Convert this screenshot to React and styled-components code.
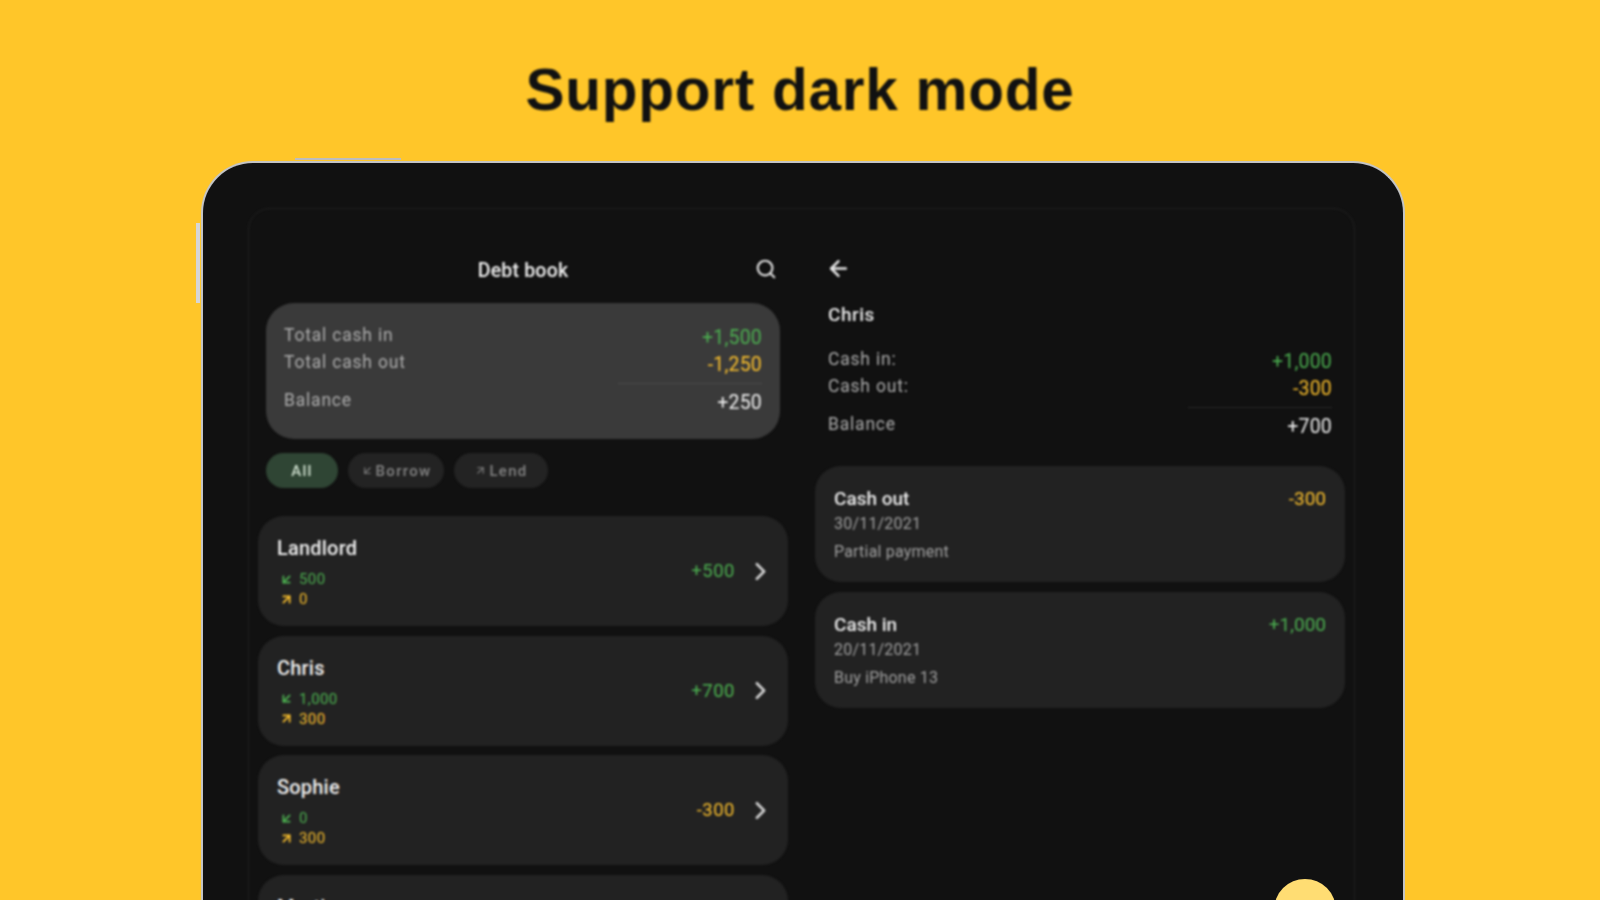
import React from "react";
import styled, { createGlobalStyle } from "styled-components";
import { ArrowDownLeft, ArrowLeft, ArrowUpRight, ChevronRight, Search } from "lucide-react";

const Global = createGlobalStyle`
  html, body { margin: 0; padding: 0; height: 100%; background: #ffc629; }
  #root { height: 100%; }
`;

const GREEN = "#4caf50";
const AMBER = "#fbc02d";
const tone = (t) => (t === "in" ? GREEN : t === "out" ? AMBER : t === "muted" ? "#a8a8a8" : "#f0f0f0");

const Page = styled.div`
  width: 1600px;
  height: 900px;
  overflow: hidden;
  background: #ffc629;
  display: flex;
  flex-direction: column;
  align-items: center;
`;
const Title = styled.h1`
  margin: 56px 0 0;
  height: 67px;
  font: 700 58.5px/67px "Liberation Sans", Arial, sans-serif;
  letter-spacing: 0.75px;
  color: #111;
  filter: blur(0.8px);
`;
const Device = styled.div`
  position: relative;
  flex: none;
  box-sizing: border-box;
  width: 1204px;
  height: 900px;
  margin: 38px 0 0 6px;
  padding: 45px 20px 0 45px;
  background: #111111;
  border: 2px solid #c4c4c4;
  border-bottom: 0;
  border-radius: 52px 52px 0 0;
`;
const TopKey = styled.span`
  position: absolute;
  left: 92px;
  top: -5px;
  width: 106px;
  height: 2px;
  background: #bdbdbd;
`;
const SideKey = styled.span`
  position: absolute;
  left: -7px;
  top: 60px;
  width: 4px;
  height: 80px;
  background: #d6d6d6;
`;
const Screen = styled.div`
  box-sizing: border-box;
  width: 1107px;
  height: 900px;
  padding: 0 9px;
  display: grid;
  grid-template-columns: 530px 530px;
  column-gap: 27px;
  border: 1px solid #222222;
  border-radius: 22px;
  filter: blur(0.8px);
`;
const Pane = styled.div`
  display: flex;
  flex-direction: column;
  padding-top: 39px;
`;
const Header = styled.div`
  position: relative;
  height: 44px;
  margin-bottom: 11px;
  display: flex;
  align-items: center;
  justify-content: center;
  font: 500 19.5px Roboto, sans-serif;
  letter-spacing: 0.2px;
  color: #f2f2f2;
`;
const SearchButton = styled.span`
  position: absolute;
  right: 11px;
  top: 10px;
  display: flex;
  color: #dcdcdc;
`;
const Summary = styled.div`
  height: 136px;
  margin: 0 8px;
  padding: 20px 18px 0;
  box-sizing: border-box;
  background: #3a3a3a;
  border-radius: 28px;
  display: flex;
  flex-direction: column;
`;
const TotalRow = styled.div`
  display: flex;
  justify-content: space-between;
  align-items: center;
  height: 27px;
`;
const TotalLabel = styled.span`
  position: relative;
  top: -2px;
  font: 400 17.5px Roboto, sans-serif;
  letter-spacing: 0.8px;
  color: #adadad;
`;
const Value = styled.span`
  position: relative;
  top: 1px;
  font: 400 19.5px Roboto, sans-serif;
  letter-spacing: 0.2px;
  color: ${(p) => tone(p.$tone)};
`;
const Rule = styled.div`
  align-self: flex-end;
  width: 144px;
  height: 1px;
  margin: 6px 0 4px;
  background: ${(p) => p.$color};
`;
const Chips = styled.div`
  display: flex;
  gap: 10px;
  margin: 14px 8px 28px;
`;
const Chip = styled.span`
  box-sizing: border-box;
  height: 35px;
  width: ${(p) => p.$w}px;
  border-radius: 18px;
  display: flex;
  align-items: center;
  justify-content: center;
  gap: 2px;
  font: 500 15px Roboto, sans-serif;
  letter-spacing: 1.3px;
  color: ${(p) => (p.$active ? "#cfe0cf" : "#858585")};
  background: ${(p) => (p.$active ? "#2f4534" : "#232323")};
`;
const List = styled.div`
  display: flex;
  flex-direction: column;
  gap: 9.7px;
`;
const Row = styled.div`
  height: 110px;
  flex: none;
  box-sizing: border-box;
  padding: 20px 13px 0 19px;
  background: #222222;
  border-radius: 26px;
  display: flex;
  align-items: flex-start;
  justify-content: space-between;
`;
const Name = styled.div`
  font: 500 20px/24px Roboto, sans-serif;
  letter-spacing: 0.2px;
  color: #f0f0f0;
  margin-bottom: 9px;
`;
const Stat = styled.div`
  display: flex;
  align-items: center;
  gap: 5px;
  height: 20px;
  padding-left: 2px;
  font: 400 15px Roboto, sans-serif;
  letter-spacing: 0.4px;
  color: ${(p) => tone(p.$tone)};
`;
const RowEnd = styled.div`
  display: flex;
  align-items: center;
  height: 70px;
  gap: 11px;
  font: 400 18.5px Roboto, sans-serif;
  letter-spacing: 0.5px;
  color: ${(p) => tone(p.$tone)};
`;
const Chevron = styled.span`
  display: flex;
  color: #cfcfcf;
`;
const Back = styled.div`
  height: 44px;
  display: flex;
  align-items: center;
  padding-left: 11px;
  margin-top: -2px;
  color: #e6e6e6;
`;
const Person = styled.div`
  padding-left: 13px;
  margin-top: 13px;
  height: 24px;
  font: 500 19px/24px Roboto, sans-serif;
  letter-spacing: 0.5px;
  color: #ececec;
`;
const Totals = styled.div`
  display: flex;
  flex-direction: column;
  margin: 20px 13px 0;
`;
const Entries = styled.div`
  display: flex;
  flex-direction: column;
  gap: 10px;
  margin-top: 27px;
`;
const Entry = styled.div`
  height: 116px;
  box-sizing: border-box;
  padding: 21px 19px 0;
  background: #222222;
  border-radius: 26px;
  display: grid;
  grid-template-columns: 1fr auto;
  grid-auto-rows: min-content;
  font-family: Roboto, sans-serif;
`;
const EntryTitle = styled.span`
  font: 500 19px/23px Roboto, sans-serif;
  color: #ececec;
`;
const EntryValue = styled.span`
  font: 400 19px/23px Roboto, sans-serif;
  color: ${(p) => tone(p.$tone)};
`;
const EntryLine = styled.span`
  grid-column: 1 / -1;
  font-size: 16px;
  letter-spacing: 0.2px;
  line-height: 27.5px;
  color: #a0a0a0;
`;
const Fab = styled.div`
  position: absolute;
  right: 67px;
  top: 716px;
  width: 62px;
  height: 62px;
  border-radius: 50%;
  background: #ffdd73;
`;

const people = [
  { name: "Landlord", inn: "500", out: "0", total: "+500", tone: "in" },
  { name: "Chris", inn: "1,000", out: "300", total: "+700", tone: "in" },
  { name: "Sophie", inn: "0", out: "300", total: "-300", tone: "out" },
  { name: "Martin", inn: "0", out: "0", total: "0", tone: "in" },
];
const entries = [
  { title: "Cash out", value: "-300", tone: "out", date: "30/11/2021", note: "Partial payment" },
  { title: "Cash in", value: "+1,000", tone: "in", date: "20/11/2021", note: "Buy iPhone 13" },
];

export default function App() {
  return (
    <Page>
      <Global />
      <Title>Support dark mode</Title>
      <Device>
        <TopKey />
        <SideKey />
        <Screen>
          <Pane>
            <Header>
              Debt book
              <SearchButton><Search size={22} strokeWidth={2.4} /></SearchButton>
            </Header>
            <Summary>
              <TotalRow><TotalLabel>Total cash in</TotalLabel><Value $tone="in">+1,500</Value></TotalRow>
              <TotalRow><TotalLabel>Total cash out</TotalLabel><Value $tone="out">-1,250</Value></TotalRow>
              <Rule $color="#4a4a4a" />
              <TotalRow><TotalLabel>Balance</TotalLabel><Value>+250</Value></TotalRow>
            </Summary>
            <Chips>
              <Chip $active $w={72}>All</Chip>
              <Chip $w={96}><ArrowDownLeft size={13} />Borrow</Chip>
              <Chip $w={94}><ArrowUpRight size={13} />Lend</Chip>
            </Chips>
            <List>
              {people.map((p) => (
                <Row key={p.name}>
                  <div>
                    <Name>{p.name}</Name>
                    <Stat $tone="in"><ArrowDownLeft size={15} strokeWidth={2.8} />{p.inn}</Stat>
                    <Stat $tone="out"><ArrowUpRight size={15} strokeWidth={2.8} />{p.out}</Stat>
                  </div>
                  <RowEnd $tone={p.tone}>
                    {p.total}
                    <Chevron><ChevronRight size={29} strokeWidth={2.2} /></Chevron>
                  </RowEnd>
                </Row>
              ))}
            </List>
          </Pane>
          <Pane>
            <Back><ArrowLeft size={25} strokeWidth={2.4} /></Back>
            <Person>Chris</Person>
            <Totals>
              <TotalRow><TotalLabel>Cash in:</TotalLabel><Value $tone="in">+1,000</Value></TotalRow>
              <TotalRow><TotalLabel>Cash out:</TotalLabel><Value $tone="out">-300</Value></TotalRow>
              <Rule $color="#2a2a2a" />
              <TotalRow><TotalLabel>Balance</TotalLabel><Value>+700</Value></TotalRow>
            </Totals>
            <Entries>
              {entries.map((e) => (
                <Entry key={e.title}>
                  <EntryTitle>{e.title}</EntryTitle>
                  <EntryValue $tone={e.tone}>{e.value}</EntryValue>
                  <EntryLine>{e.date}</EntryLine>
                  <EntryLine>{e.note}</EntryLine>
                </Entry>
              ))}
            </Entries>
          </Pane>
        </Screen>
        <Fab />
      </Device>
    </Page>
  );
}
